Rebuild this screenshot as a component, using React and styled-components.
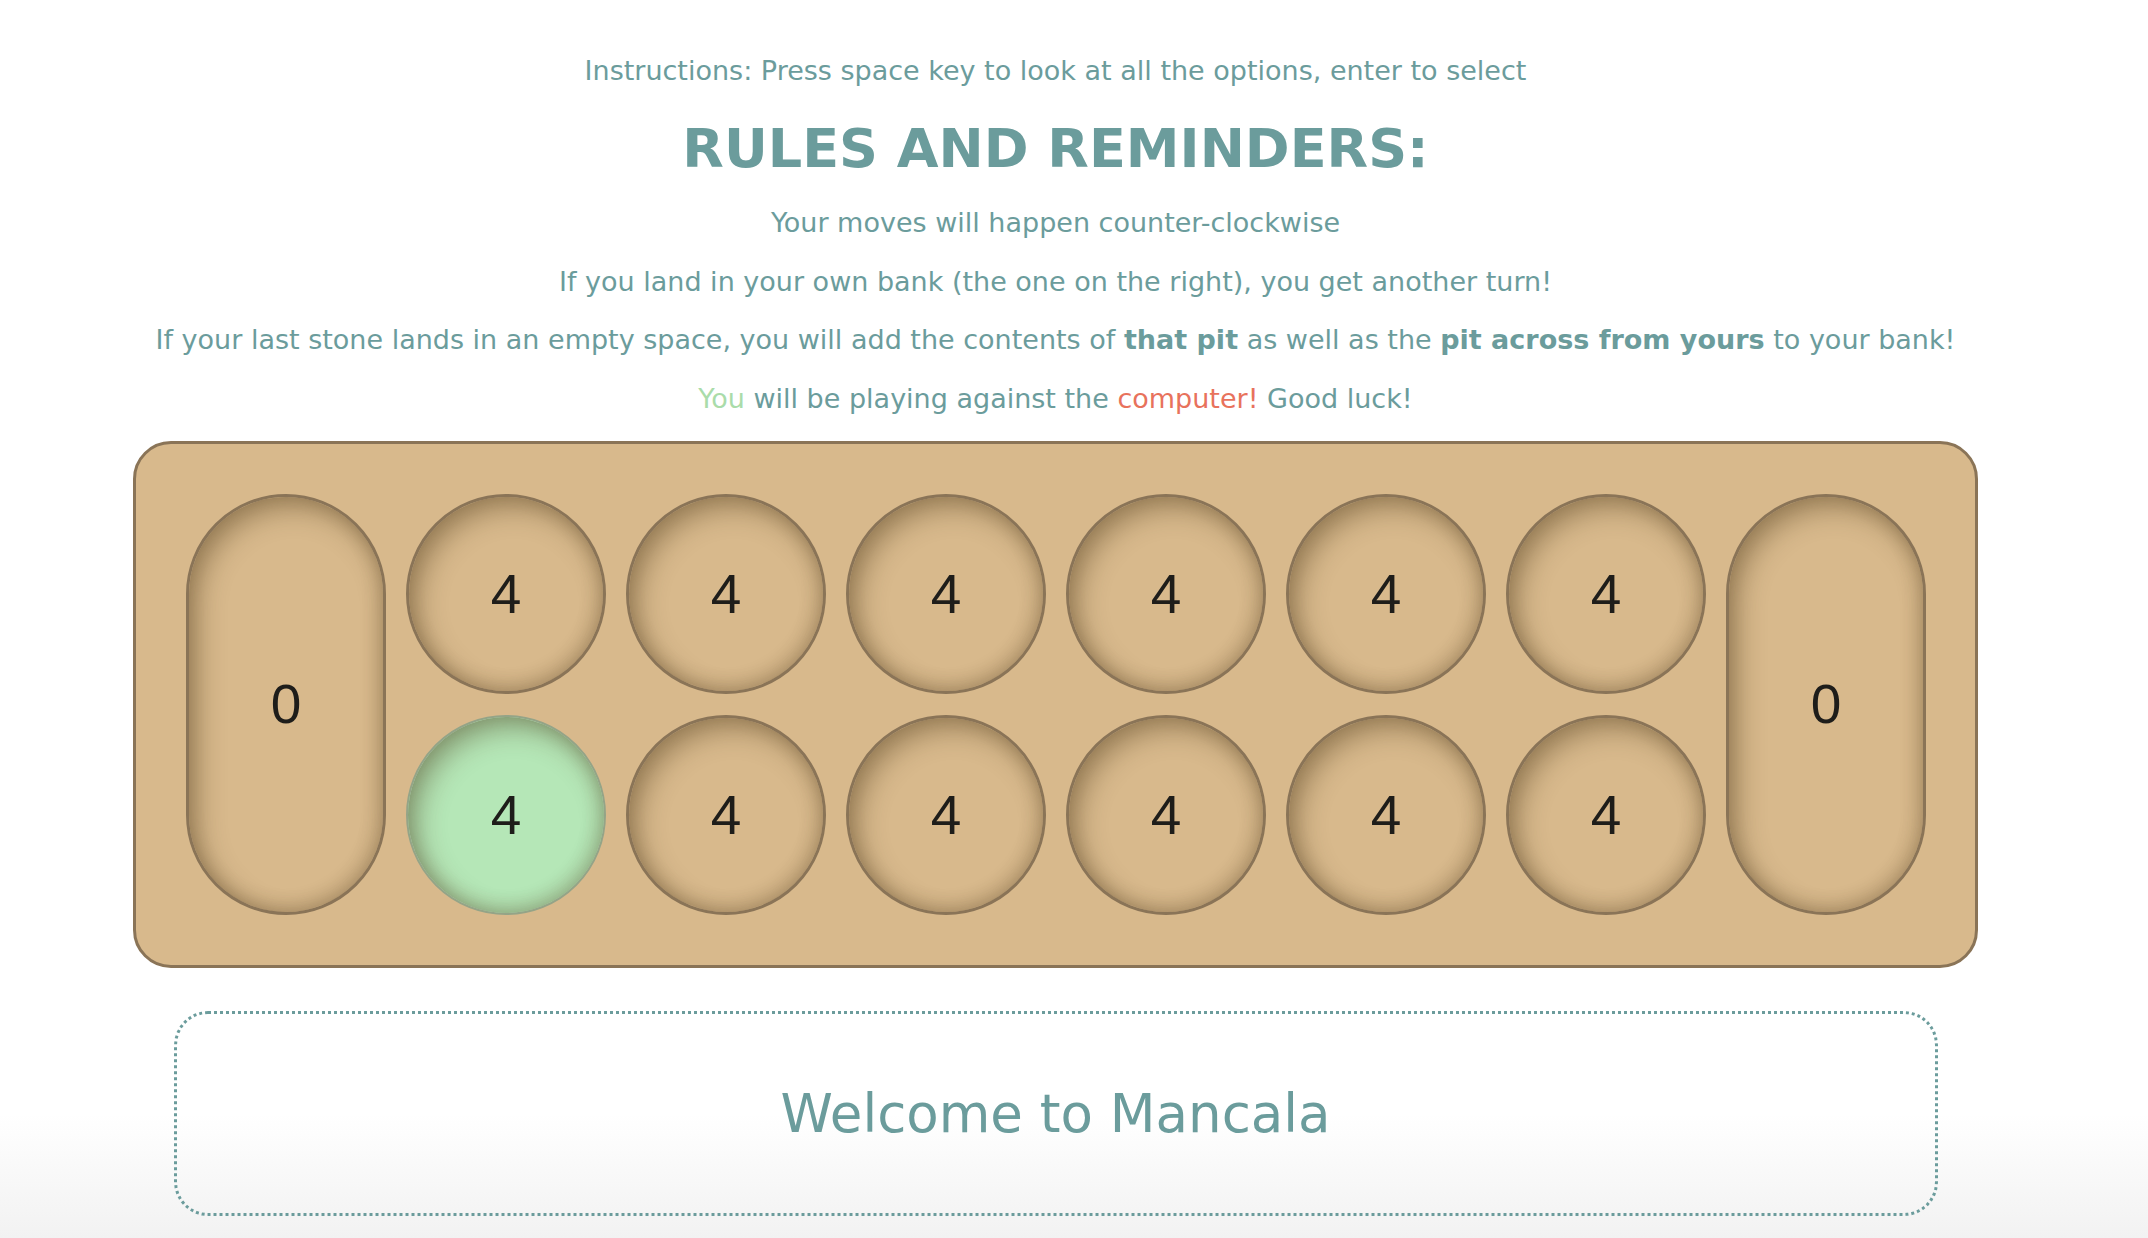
import React from 'react';
import styled, { createGlobalStyle } from 'styled-components';

const teal = '#6b9c9c';

const GlobalStyle = createGlobalStyle`
  html, body {
    margin: 0;
    padding: 0;
  }
  body {
    min-height: 100vh;
    background: linear-gradient(to bottom, #ffffff 0%, #ffffff 90%, #f2f2f2 100%);
    font-family: "DejaVu Sans", Verdana, sans-serif;
    color: ${teal};
  }
`;

const Page = styled.div`
  width: 2111px;
  display: flex;
  flex-direction: column;
  align-items: center;
  text-align: center;
  padding-top: 56px;
`;

const Instructions = styled.p`
  margin: 0;
  font-size: 27px;
  line-height: 30px;
`;

const Title = styled.h1`
  margin: 30px 0 0;
  font-size: 54px;
  line-height: 65px;
  font-weight: bold;
`;

const Rules = styled.div`
  margin-top: 26px;
  display: flex;
  flex-direction: column;
  gap: 27.5px;
`;

const Rule = styled.p`
  margin: 0;
  font-size: 27px;
  line-height: 31px;

  b {
    font-weight: bold;
  }
`;

const Player = styled.span`
  color: ${(p) => (p.$cpu ? '#e8725c' : '#aadcaa')};
`;

const Board = styled.div`
  margin-top: 27px;
  box-sizing: border-box;
  width: 1845px;
  height: 527px;
  padding: 50px 49px 50px 50px;
  background: #d8b98c;
  border: 3px solid #8a7457;
  border-radius: 38px;
  display: grid;
  grid-template-columns: repeat(8, 200px);
  grid-template-rows: repeat(2, 200px);
  column-gap: 20px;
  row-gap: 21px;
`;

const Pit = styled.div`
  box-sizing: border-box;
  width: 200px;
  height: ${(p) => (p.$bank ? '421px' : '200px')};
  grid-column: ${(p) => p.$col};
  grid-row: ${(p) => (p.$bank ? '1 / span 2' : p.$row)};
  border-radius: 100px;
  border: ${(p) => (p.$active ? '2px solid #94a487' : '3px solid #8a7457')};
  background: ${(p) => (p.$active ? '#b5e7b7' : '#d8b98c')};
  box-shadow:
    inset 8px 10px 28px rgba(70, 50, 20, 0.42),
    inset -3px -5px 18px rgba(70, 50, 20, 0.24);
  display: flex;
  align-items: center;
  justify-content: center;
  font-family: "Liberation Sans", Arial, sans-serif;
  font-size: 55px;
  color: #1e1d1a;
`;

const Message = styled.div`
  margin-top: 43px;
  box-sizing: border-box;
  width: 1764px;
  height: 205px;
  border: 3px dotted ${teal};
  border-radius: 34px;
  display: flex;
  align-items: center;
  justify-content: center;
  font-size: 53px;
`;

const top = [4, 4, 4, 4, 4, 4];
const bottom = [4, 4, 4, 4, 4, 4];

export default function App() {
  return (
    <>
      <GlobalStyle />
      <Page>
        <Instructions>
          Instructions: Press space key to look at all the options, enter to select
        </Instructions>
        <Title>RULES AND REMINDERS:</Title>
        <Rules>
          <Rule>Your moves will happen counter-clockwise</Rule>
          <Rule>If you land in your own bank (the one on the right), you get another turn!</Rule>
          <Rule>
            If your last stone lands in an empty space, you will add the contents of <b>that pit</b> as
            well as the <b>pit across from yours</b> to your bank!
          </Rule>
          <Rule>
            <Player>You</Player> will be playing against the <Player $cpu>computer!</Player> Good luck!
          </Rule>
        </Rules>
        <Board>
          <Pit $bank $col={1}>0</Pit>
          {top.map((n, i) => (
            <Pit key={'t' + i} $col={i + 2} $row={1}>
              {n}
            </Pit>
          ))}
          {bottom.map((n, i) => (
            <Pit key={'b' + i} $col={i + 2} $row={2} $active={i === 0}>
              {n}
            </Pit>
          ))}
          <Pit $bank $col={8}>0</Pit>
        </Board>
        <Message>Welcome to Mancala</Message>
      </Page>
    </>
  );
}
